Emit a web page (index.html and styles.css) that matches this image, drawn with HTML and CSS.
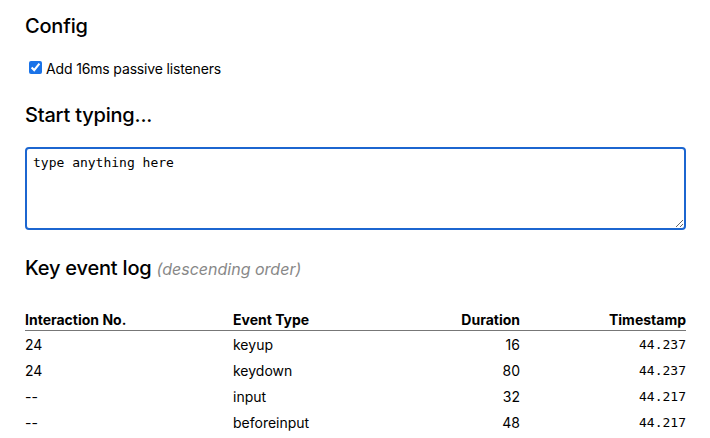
FILE: index.html
```html
<!DOCTYPE html>
<html lang="en">
<head>
<meta charset="utf-8">
<title>Key event log</title>
<link rel="stylesheet" href="styles.css">
</head>
<body>
<main class="page">
  <h2 class="heading heading-config">Config</h2>
  <label class="option">
    <input type="checkbox" class="option-box" checked>
    <span class="option-text">Add 16ms passive listeners</span>
  </label>

  <h2 class="heading heading-typing">Start typing...</h2>
  <textarea class="input-area">type anything here</textarea>

  <h2 class="heading heading-log">Key event log <span class="note">(descending order)</span></h2>
  <table class="log">
    <colgroup>
      <col class="c-num">
      <col class="c-type">
      <col class="c-dur">
      <col class="c-ts">
    </colgroup>
    <thead>
      <tr>
        <th class="left">Interaction No.</th>
        <th class="left">Event Type</th>
        <th class="right">Duration</th>
        <th class="right">Timestamp</th>
      </tr>
    </thead>
    <tbody>
      <tr><td>24</td><td>keyup</td><td class="right">16</td><td class="right mono">44.237</td></tr>
      <tr><td>24</td><td>keydown</td><td class="right">80</td><td class="right mono">44.237</td></tr>
      <tr><td>--</td><td>input</td><td class="right">32</td><td class="right mono">44.217</td></tr>
      <tr><td>--</td><td>beforeinput</td><td class="right">48</td><td class="right mono">44.217</td></tr>
    </tbody>
  </table>
</main>
</body>
</html>
```

FILE: styles.css
```css
html, body {
  margin: 0;
  padding: 0;
  background: #fff;
}

body {
  font-family: Inter, "Liberation Sans", sans-serif;
  font-size: 14px;
  line-height: 20px;
  color: #000;
}

.page {
  padding: 0 24px 0 25px;
}

.heading {
  font-size: 20px;
  line-height: 24px;
  font-weight: 500;
  letter-spacing: -0.2px;
  margin: 0;
}

.heading-config {
  padding-top: 14px;
}

.option {
  display: flex;
  align-items: center;
  margin-top: 21px;
  height: 20px;
}

.option-box {
  width: 13px;
  height: 13px;
  margin: 0 4px 3px 4px;
  accent-color: #1a73e8;
}

.option-text {
  letter-spacing: -0.15px;
}

.heading-typing {
  margin-top: 24px;
}

.input-area {
  display: block;
  box-sizing: border-box;
  width: 100%;
  height: 83px;
  margin-top: 20px;
  padding: 6px 6px;
  border: 2px solid #1c66d0;
  border-radius: 4px;
  outline: none;
  font-family: "DejaVu Sans Mono", "Liberation Mono", monospace;
  font-size: 13px;
  line-height: 16px;
  color: #000;
  resize: both;
}

.heading-log {
  margin-top: 26px;
}

.note {
  font-size: 16px;
  font-style: italic;
  font-weight: 400;
  letter-spacing: 0;
  color: #888;
}

.log {
  width: 100%;
  margin-top: 29px;
  border-collapse: collapse;
  table-layout: fixed;
}

.c-num { width: 208px; }
.c-dur { width: 120px; }
.c-ts { width: 166px; }

.log th {
  font-weight: 700;
  padding: 0;
  line-height: 20px;
  border-bottom: 1px solid #777;
}

.log td {
  padding: 4px 0 2px;
  line-height: 20px;
}

.left { text-align: left; }
.right { text-align: right; }

.mono {
  font-family: "DejaVu Sans Mono", "Liberation Mono", monospace;
  font-size: 13px;
}
```
